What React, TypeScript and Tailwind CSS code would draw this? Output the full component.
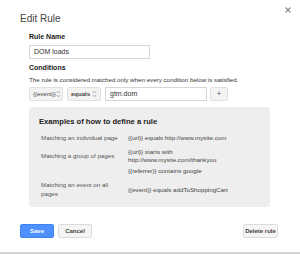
import React from "react";

function UpDown() {
	return (
		<svg width="5" height="8" viewBox="0 0 5 8" className="shrink-0">
			<path d="M0.8 3 L2.5 1.2 L4.2 3" fill="none" stroke="#999" strokeWidth="0.8" />
			<path d="M0.8 5 L2.5 6.8 L4.2 5" fill="none" stroke="#999" strokeWidth="0.8" />
		</svg>
	);
}

function Select({ label, bold }: { label: string; bold?: boolean }) {
	return (
		<div className="w-[34px] h-[14px] flex items-center justify-between pl-[3px] pr-[3px] bg-[#f3f3f3] border border-[#e0e0e0] rounded-[2px]">
			<span className={"text-[6px] text-[#444] " + (bold ? "font-bold" : "")}>{label}</span>
			<UpDown />
		</div>
	);
}

export default function App() {
	return (
		<div
			className="relative w-[300px] h-[254px] bg-white border-b-2 border-[#d4d4d4] text-[#333] overflow-hidden"
			style={{ fontFamily: '"Liberation Sans", Arial, sans-serif' }}
		>
			<button className="absolute top-[5px] right-[7px] w-[10px] h-[10px] flex items-center justify-center">
				<svg width="6" height="6" viewBox="0 0 6 6">
					<path d="M0.5 0.5 L5.5 5.5 M5.5 0.5 L0.5 5.5" stroke="#888" strokeWidth="1.1" />
				</svg>
			</button>

			<div className="pt-[13px] pl-[20px] text-[10px] leading-[12px] text-[#444]">Edit Rule</div>

			<div className="pl-[29px] pr-[30px]">
				<div className="mt-[7px] text-[7px] leading-[9px] font-bold text-[#222]">Rule Name</div>
				<div className="mt-[4px] w-[121px] h-[14px] border border-[#d6d6d6] flex items-center pl-[4px] text-[7px] text-[#333]">
					DOM loads
				</div>

				<div className="mt-[4px] text-[7px] leading-[9px] font-bold text-[#222]">Conditions</div>
				<div className="mt-[3px] text-[6.2px] leading-[9px] text-[#333]">
					The rule is considered matched only when every condition below is satisfied.
				</div>

				<div className="mt-[3px] flex items-center">
					<Select label="{{event}}" />
					<div className="ml-[4px]">
						<Select label="equals" bold />
					</div>
					<div className="ml-[4px] w-[102px] h-[14px] border border-[#d6d6d6] flex items-center pl-[4px] text-[7px] text-[#333]">
						gtm.dom
					</div>
					<div className="ml-[3px] w-[18px] h-[14px] bg-[#f3f3f3] border border-[#e0e0e0] rounded-[2px] flex items-center justify-center text-[7px] text-[#444]">
						+
					</div>
				</div>

				<div className="mt-[6px] w-[241px] h-[100px] bg-[#eeeeee] rounded-[3px] pt-[9px] pl-[10px] pr-[8px] text-[6.2px]">
					<div className="text-[7.6px] leading-[11px] font-bold text-[#222]">Examples of how to define a rule</div>
					<div className="pl-[2px]">
						<div className="mt-[6px] flex items-center leading-[9px]">
							<div className="w-[87px] text-[#555]">Matching an individual page</div>
							<div className="text-[#444]">{"{{url}} equals http://www.mysite.com"}</div>
						</div>
						<div className="mt-[5.5px] flex items-center leading-[8px]">
							<div className="w-[87px] text-[#555]">Matching a group of pages</div>
							<div className="text-[#444]">
								<div>{"{{url}} starts with"}</div>
								<div>http://www.mysite.com/thankyou</div>
							</div>
						</div>
						<div className="mt-[3px] flex leading-[8px]">
							<div className="w-[87px]" />
							<div className="text-[#444]">{"{{referrer}} contains google"}</div>
						</div>
						<div className="mt-[5.5px] flex items-center leading-[9px]">
							<div className="w-[87px] text-[#555]">
								<div>Matching an event on all</div>
								<div>pages</div>
							</div>
							<div className="text-[#444]">{"{{event}} equals addToShoppingCart"}</div>
						</div>
					</div>
				</div>
			</div>

			<div className="mt-[17px] pl-[20px] pr-[22px] flex items-center">
				<button className="w-[34px] h-[14px] bg-[#4d90fe] border border-[#3f83f0] rounded-[2px] text-white text-[6px] font-bold">
					Save
				</button>
				<button className="ml-[4px] w-[34px] h-[14px] bg-[#f5f5f5] border border-[#dcdcdc] rounded-[2px] text-[#444] text-[6px] font-bold">
					Cancel
				</button>
				<button className="ml-auto w-[35px] h-[14px] bg-[#f5f5f5] border border-[#dcdcdc] rounded-[2px] text-[#444] text-[6px] font-bold">
					Delete rule
				</button>
			</div>
		</div>
	);
}
